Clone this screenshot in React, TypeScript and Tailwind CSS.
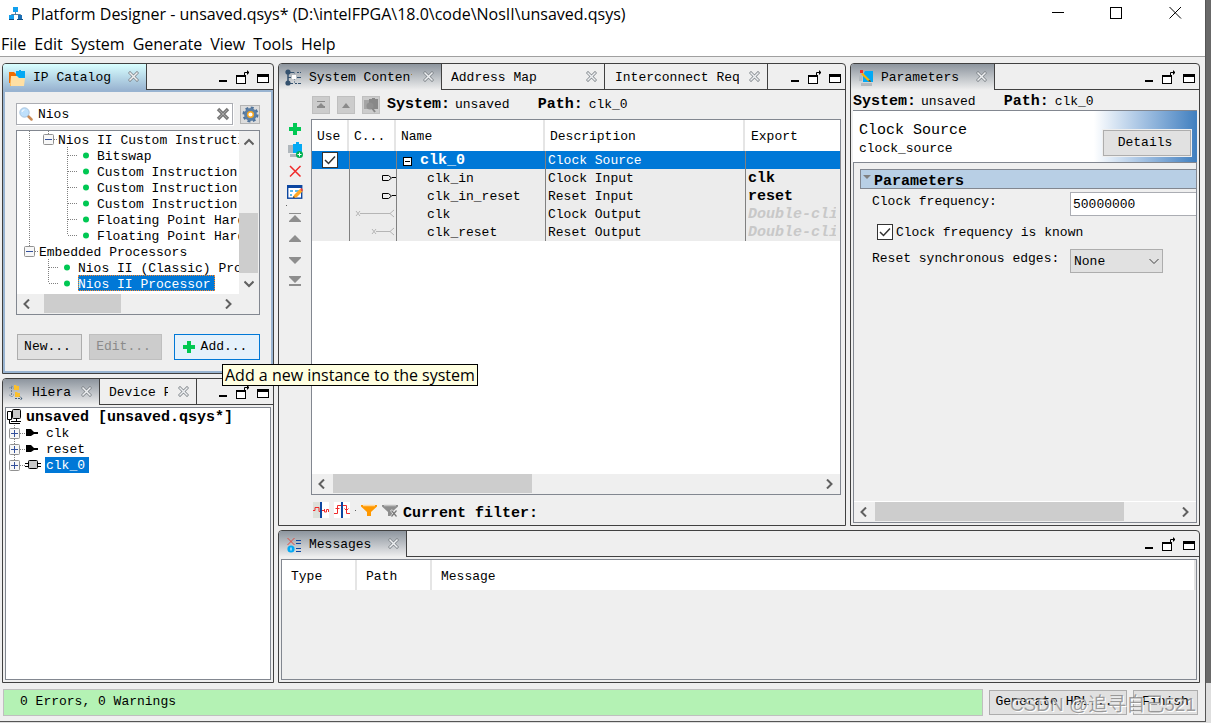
import { useState, type ReactNode } from "react";
import clsx from "clsx";

const mono = "font-['Liberation_Mono','Noto_Sans_CJK_SC',monospace]";
const ui = "font-['Open_Sans','Noto_Sans_CJK_SC',sans-serif]";

/* ---------- window chrome icons ---------- */

function AppIcon() {
  return (
    <svg width="14" height="14" viewBox="0 0 14 14" fill="none">
      <rect x="4" y="0" width="5" height="5" fill="#12a0ee" />
      <path d="M6.5 5v3M2.5 9V7.500h9V9" stroke="#5b7f9c" />
      <rect x="0" y="8" width="5" height="4" fill="#12a0ee" />
      <rect x="9" y="8" width="4" height="4" fill="#1b6fb5" />
      <path d="M0 12.500h5M8 12.500h6" stroke="#0d4f86" />
    </svg>
  );
}

function CloseTabIcon() {
  return (
    <svg width="11" height="11" viewBox="0 0 11 11" fill="none" strokeLinecap="square">
      <path d="M2 2l7 7M9 2l-7 7" stroke="#7d8388" strokeWidth="3" />
      <path d="M2 2l7 7M9 2l-7 7" stroke="#eef0f2" strokeWidth="1.5" />
    </svg>
  );
}

function PanelButtons() {
  return (
    <div className="flex gap-[5px] pb-[5px] pr-1">
      <button aria-label="Minimize panel">
        <svg width="14" height="14" viewBox="0 0 14 14" className="block">
          <path d="M2 10h8v2H2z" fill="#000" />
        </svg>
      </button>
      <button aria-label="Float panel">
        <svg width="14" height="14" viewBox="0 0 14 14" className="block" fill="none" stroke="#000">
          <rect x="0.500" y="5.500" width="9" height="8" fill="#fff" />
          <path d="M0 6h10" strokeWidth="2" />
          <path d="M8.500 5V2.500H13M11.500 0.500v4M12.500 1.500v2" />
        </svg>
      </button>
      <button aria-label="Maximize panel">
        <svg width="14" height="14" viewBox="0 0 14 14" className="block" fill="none" stroke="#000">
          <rect x="2.500" y="4.500" width="11" height="8" fill="#fff" />
          <path d="M2 5.500h12" strokeWidth="3" />
        </svg>
      </button>
    </div>
  );
}

/* ---------- panel + tabs ---------- */

type TabDef = { label: string; icon?: ReactNode; width: string; clip?: string; pad?: string };

function Panel({
  tabs,
  focused,
  className,
  children,
}: {
  tabs: TabDef[];
  focused?: boolean;
  className?: string;
  children: ReactNode;
}) {
  const [active, setActive] = useState(0);
  return (
    <section className={clsx("flex min-w-0 flex-col rounded-t-[4px] border border-[#404040] bg-[#efefef]", className)}>
      <div className="flex h-[26px] shrink-0">
        {tabs.map((tab, i) => (
          <div
            key={tab.label}
            className={clsx(
              "flex shrink-0 items-center justify-between border-r border-[#404040] pr-[7px]",
              tab.width,
              tab.pad ?? "pl-[6px]",
              i === 0 && "rounded-tl-[3px]",
              i !== active && "border-b",
              i === active && focused && "bg-linear-to-b from-[#d9ffff] to-[#99b4d1]",
              i === active && !focused && "bg-linear-to-b from-[#8d959e] to-[#efefef]"
            )}
          >
            <button onClick={() => setActive(i)} className="flex min-w-0 items-center gap-[7px] pt-px">
              {tab.icon}
              <span className={clsx("overflow-hidden whitespace-nowrap pt-px", tab.clip)}>{tab.label}</span>
            </button>
            <button aria-label={`Close ${tab.label}`} className="pb-px">
              <CloseTabIcon />
            </button>
          </div>
        ))}
        <div className="flex flex-1 items-end justify-end border-b border-[#404040]">
          <PanelButtons />
        </div>
      </div>
      {children}
    </section>
  );
}

/* ---------- scrollbars ---------- */

function Chevron({ d }: { d: string }) {
  return (
    <svg width="10" height="10" viewBox="0 0 10 10" fill="none" stroke="#606060" strokeWidth="2">
      <path d={d} />
    </svg>
  );
}

function HScroll({ thumb }: { thumb: string }) {
  return (
    <div className="flex h-5 shrink-0 bg-[#efefef]">
      <button aria-label="Scroll left" className="flex w-[21px] items-center justify-center pr-px">
        <Chevron d="M7 0.500L2.500 5 7 9.500" />
      </button>
      <div className="flex-1 pb-px">
        <div className={clsx("h-full bg-[#cdcdcd]", thumb)} />
      </div>
      <button aria-label="Scroll right" className="flex w-[21px] items-center justify-center pr-px">
        <Chevron d="M3 0.500L7.500 5 3 9.500" />
      </button>
    </div>
  );
}

/* ---------- tree pieces ---------- */

type Guide = "blank" | "line" | "tee" | "ell";

const guidePaths: Record<Guide, string> = {
  blank: "",
  line: "M12.500 0v16",
  tee: "M12.500 0v16M13 8.500h6",
  ell: "M12.500 0v8M13 8.500h6",
};

function GuideCell({ kind }: { kind: Guide }) {
  return (
    <svg width="19" height="16" viewBox="0 0 19 16" fill="none" stroke="#808080" strokeDasharray="1 1" className="shrink-0">
      <path d={guidePaths[kind]} />
    </svg>
  );
}

function Expander({ open }: { open?: boolean }) {
  return (
    <svg width="22" height="16" viewBox="0 0 22 16" fill="none" className="shrink-0">
      <path d="M12.500 0v3M18 8.500h4" stroke="#808080" strokeDasharray="1 1" />
      <rect x="7.500" y="3.500" width="10" height="10" rx="1" fill="#f7f7f7" stroke="#919191" />
      <path d={open ? "M9 8.500h7" : "M9 8.500h7M12.500 5v7"} stroke="#33509c" />
    </svg>
  );
}

function LeafDot() {
  return (
    <svg width="23" height="16" viewBox="0 0 23 16" fill="none" className="shrink-0">
      <path d="M0 8.500h4" stroke="#808080" strokeDasharray="1 1" />
      <circle cx="12" cy="8.500" r="3" fill="#00c853" />
    </svg>
  );
}

type CatalogRow = { label: string; guides: Guide[]; group?: boolean };

const catalog: CatalogRow[] = [
  { label: "Nios II Custom Instruction Components", guides: ["line"], group: true },
  { label: "Bitswap", guides: ["line", "blank", "tee"] },
  { label: "Custom Instruction Interconnect", guides: ["line", "blank", "tee"] },
  { label: "Custom Instruction Master", guides: ["line", "blank", "tee"] },
  { label: "Custom Instruction Slave", guides: ["line", "blank", "tee"] },
  { label: "Floating Point Hardware", guides: ["line", "blank", "tee"] },
  { label: "Floating Point Hardware 2", guides: ["line", "blank", "ell"] },
  { label: "Embedded Processors", guides: [], group: true },
  { label: "Nios II (Classic) Processor", guides: ["blank", "tee"] },
  { label: "Nios II Processor", guides: ["blank", "ell"] },
];

/* ---------- IP catalog ---------- */

function CatalogTabIcon() {
  return (
    <svg width="17" height="16" viewBox="0 0 17 16">
      <path d="M0 2h5l2 2v9H0z" fill="#ef6c00" />
      <path d="M7 1h3V0h2v1h4v7H7z" fill="#03a9f4" />
      <path d="M2 6h6l2 2h6l-1 8H1z" fill="#ffe0a3" />
      <path d="M1 8l1 8h-1z" fill="#ffb74d" />
    </svg>
  );
}

function IpCatalog() {
  const [query, setQuery] = useState("Nios");
  const [selected, setSelected] = useState("Nios II Processor");

  return (
    <Panel focused className="h-[311px] shrink-0" tabs={[{ label: "IP Catalog", icon: <CatalogTabIcon />, width: "w-[144px]" }]}>
      <div className="flex min-h-0 flex-1 flex-col border-2 border-[#99b4d1] p-[11px]">
        <div className="flex h-[22px] shrink-0 gap-[7px]">
          <div className="flex min-w-0 flex-1 items-center border border-[#abadb3] bg-white px-[2px] shadow-[1px_1px_0_#fff]">
            <svg width="14" height="14" viewBox="0 0 14 14" fill="none">
              <path d="M8.500 8.500l4 4" stroke="#c98a55" strokeWidth="2.500" strokeLinecap="round" />
              <circle cx="5.500" cy="5.500" r="4.700" fill="#bfe0fb" stroke="#a9c4de" />
              <path d="M3 5a2.500 2.500 0 0 1 2.500-2.200" stroke="#fff" />
            </svg>
            <input
              aria-label="Search IP"
              value={query}
              onChange={(e) => setQuery(e.target.value)}
              className="min-w-0 flex-1 bg-transparent pl-[5px] pt-px outline-none"
            />
            <button onClick={() => setQuery("")} aria-label="Clear search">
              <svg width="14" height="14" viewBox="0 0 14 14" fill="none" className="block">
                <path d="M2 2l10 10M12 2L2 12" stroke="#7b7b7b" strokeWidth="3.400" />
                <path d="M3 3l8 8M11 3l-8 8" stroke="#a3a3a3" />
              </svg>
            </button>
          </div>
          <button aria-label="Settings" className="mt-[2px] flex h-[19px] w-5 items-center justify-center border border-[#b4b4b4] bg-[#dcdcdc]">
            <svg width="17" height="17" viewBox="0 0 18 18" fill="none" className="shrink-0">
              <circle cx="9" cy="9" r="7" stroke="#4f7299" strokeWidth="3" strokeDasharray="3 2.500" />
              <circle cx="9" cy="9" r="4.800" stroke="#5b7fa6" strokeWidth="4" />
              <circle cx="9" cy="9" r="3" fill="#fff" stroke="#f5a623" strokeWidth="1.600" />
            </svg>
          </button>
        </div>

        <div className="mt-[5px] flex min-h-0 flex-1 flex-col border border-[#828790] bg-white">
          <div className="flex min-h-0 flex-1">
            <ul className="min-w-0 flex-1 overflow-hidden">
              {catalog.map((row, i) => (
                <li key={i} className="flex h-4 items-center whitespace-nowrap">
                  {row.guides.map((g, n) => (
                    <GuideCell key={n} kind={g} />
                  ))}
                  {row.group ? <Expander open /> : <LeafDot />}
                  <button
                    onClick={() => setSelected(row.label)}
                    className={clsx(
                      "h-4 pt-[2px]",
                      selected === row.label &&
                        "bg-[#0078d7] pr-1 text-white outline-1 -outline-offset-1 outline-dotted outline-[#ff8728]"
                    )}
                  >
                    {row.label}
                  </button>
                </li>
              ))}
            </ul>
            <div className="flex w-5 shrink-0 flex-col items-center bg-[#efefef] pr-px">
              <button aria-label="Scroll up" className="flex h-[21px] items-center">
                <Chevron d="M0.500 7.500L5 3l4.500 4.500" />
              </button>
              <div className="flex w-full flex-1 flex-col justify-end">
                <div className="h-[50%] bg-[#cdcdcd]" />
              </div>
              <button aria-label="Scroll down" className="flex h-[21px] items-center">
                <Chevron d="M0.500 2.500L5 7l4.500-4.500" />
              </button>
            </div>
          </div>
          <div className="bg-[#efefef] pr-5">
            <HScroll thumb="ml-[6px] w-[43%]" />
          </div>
        </div>

        <div className="mt-[19px] flex h-[26px] shrink-0 pl-px">
          <button className="w-[65px] border border-[#adadad] bg-[#e1e1e1] pr-1">New...</button>
          <button disabled className="ml-[7px] w-[73px] border border-[#bfbfbf] bg-[#cccccc] pr-1 text-[#8a8a8a]">
            Edit...
          </button>
          <button className="ml-auto flex w-[86px] items-center justify-center gap-[6px] border border-[#0078d7] bg-[#e5f1fb] pr-1">
            <svg width="12" height="12" viewBox="0 0 12 12">
              <path d="M4 0h4v4h4v4H8v4H4V8H0V4h4z" fill="#00c853" />
            </svg>
            Add...
          </button>
        </div>
      </div>
    </Panel>
  );
}

/* ---------- hierarchy ---------- */

function HierarchyTabIcon() {
  return (
    <svg width="14" height="16" viewBox="0 0 14 16" fill="none">
      <path d="M2.500 2v9M0 3.500l2.500-2.500L5 3.500M0 9.500L2.500 12 5 9.500" stroke="#6b7f92" strokeDasharray="2 1" />
      <path d="M5 0h2l1 1h2v4H5zM6 7h2l1 1h2v4H6z" fill="#fbc02d" />
      <path d="M6 13.500h7M11 11.500l2 2-2 2" stroke="#44607a" strokeDasharray="2 1" />
    </svg>
  );
}

function PortIcon() {
  return (
    <svg width="14" height="10" viewBox="0 0 14 10">
      <path d="M1 1h5l3 3h4v2H9L6 8H1z" fill="#000" />
    </svg>
  );
}

function ChipIcon() {
  return (
    <svg width="16" height="10" viewBox="0 0 16 10" fill="none">
      <path d="M0 3.500h16M0 6.500h16" stroke="#000" />
      <rect x="3.500" y="0.500" width="9" height="8" rx="1" fill="#c8c8c8" stroke="#000" />
    </svg>
  );
}

function Hierarchy() {
  const [selected, setSelected] = useState("clk_0");
  const nodes = [
    { name: "clk", icon: <PortIcon /> },
    { name: "reset", icon: <PortIcon /> },
    { name: "clk_0", icon: <ChipIcon /> },
  ];
  return (
    <Panel
      className="min-h-0 flex-1"
      tabs={[
        { label: "Hierarchy", icon: <HierarchyTabIcon />, width: "w-[97px]", clip: "w-10 ml-[2px]" },
        { label: "Device Family", width: "w-[97px]", clip: "w-[59px]", pad: "pl-[9px]" },
      ]}
    >
      <div className="min-h-0 flex-1 p-[2px]">
        <div className="h-full border border-[#828790] bg-white">
          <div className="flex h-[17px] items-center gap-1 pl-px">
            <svg width="15" height="15" viewBox="0 0 15 15" fill="none" stroke="#000">
              <path d="M0.500 2.500h4v8h-4z" fill="#fff" />
              <rect x="5.500" y="0.500" width="8" height="9" rx="1" fill="#c8c8c8" />
              <path d="M9.500 10v2M4 12.500h10M2.500 11v3.500H13" />
            </svg>
            <span className="pt-[3px] text-[15px] font-bold leading-4">unsaved [unsaved.qsys*]</span>
          </div>
          <ul>
            {nodes.map((n, i) => (
              <li key={n.name} className="flex h-4 items-center">
                <svg width="19" height="16" viewBox="0 0 19 16" fill="none">
                  <path d={i < 2 ? "M8.500 0v16M14 8.500h5" : "M8.500 0v8M14 8.500h5"} stroke="#808080" strokeDasharray="1 1" />
                  <rect x="3.500" y="3.500" width="10" height="10" rx="1" fill="#f7f7f7" stroke="#919191" />
                  <path d="M5 8.500h7M8.500 5v7" stroke="#33509c" />
                </svg>
                <span className="flex w-5 justify-start">{n.icon}</span>
                <button
                  onClick={() => setSelected(n.name)}
                  className={clsx("h-4 pl-px pr-1 pt-px", selected === n.name && "bg-[#0078d7] text-white")}
                >
                  {n.name}
                </button>
              </li>
            ))}
          </ul>
        </div>
      </div>
    </Panel>
  );
}

/* ---------- system contents ---------- */

function SystemPath({ className }: { className?: string }) {
  return (
    <div className={clsx("flex items-center whitespace-nowrap", className)}>
      <b className="text-[15px] leading-4">System:</b>
      <span className="ml-[5px]">unsaved</span>
      <b className="ml-7 text-[15px] leading-4">Path:</b>
      <span className="ml-[6px]">clk_0</span>
    </div>
  );
}

function SystemTabIcon() {
  return (
    <svg width="17" height="17" viewBox="0 0 17 17" fill="none">
      <path d="M3 3.500h7M12 3.500h2M15 3.500h1M3 8.500h3M12 8.500h4M3 14.500h5M10 14.500h2M13 14.500h3" stroke="#34516e" />
      <path d="M9.500 3v11" stroke="#8393a3" strokeDasharray="2 1" />
      <path d="M3 3v11" stroke="#34516e" strokeWidth="1.500" />
      <circle cx="3" cy="3" r="2.600" fill="#34516e" />
      <circle cx="3" cy="14" r="2.600" fill="#34516e" />
      <path d="M7 6h4v4H7z" fill="#fff" />
    </svg>
  );
}

function ToolSvg({ children }: { children: ReactNode }) {
  return (
    <svg width="16" height="16" viewBox="0 0 16 16" fill="none" className="block">
      {children}
    </svg>
  );
}

const editTools = [
  { label: "Add", art: <path d="M6 2h4v4h4v4h-4v4H6v-4H2V6h4z" fill="#00c853" /> },
  {
    label: "Duplicate",
    art: (
      <>
        <path d="M1 3h5v8H1zM3 12h8v3H3z" fill="#b0b7bc" />
        <path d="M6 2h3V0h3v2h3v9H6z" fill="#03a9f4" />
        <circle cx="12.500" cy="12.500" r="3.500" fill="#00b050" />
        <path d="M10.500 12.500h4M12.500 10.500v4" stroke="#fff" />
      </>
    ),
  },
  { label: "Remove", art: <path d="M3 3l10.500 10.500M13.500 3L3 13.500" stroke="#f02a2a" strokeWidth="1.500" /> },
  {
    label: "Edit",
    art: (
      <>
        <rect x="0.700" y="1.700" width="14" height="12.500" fill="#fff" stroke="#0d47a1" strokeWidth="1.400" />
        <path d="M0 2.500h15" stroke="#0d47a1" strokeWidth="3" />
        <path d="M3 7h3M3 11h2M8 7h4" stroke="#29a3e8" strokeWidth="1.500" />
        <path d="M6 14l1-3 6-6 2.500 2.500-6 6z" fill="#ffa726" />
        <path d="M13 5l1.500-1L16 6l-.8 1.500z" fill="#f44336" />
        <path d="M6 14l.5-2 1.500 1.500z" fill="#333" />
      </>
    ),
  },
];

const moveTools = [
  { label: "Move to top", art: <path d="M2 3h12v1H2zM8 5l6 6v1H2v-1z" fill="#8e8e8e" /> },
  { label: "Move up", art: <path d="M8 4l6 6v1H2v-1z" fill="#8e8e8e" /> },
  { label: "Move down", art: <path d="M2 5h12v1l-6 6-6-6z" fill="#8e8e8e" /> },
  { label: "Move to bottom", art: <path d="M2 3h12v1l-6 6-6-6zM2 11h12v2H2z" fill="#8e8e8e" /> },
];

type SysRow = { name: string; description: string; exportAs?: string; hint?: boolean; conn: ReactNode };

const portIn = <path d="M34.500 6.500h6l3 2.500-3 2.500h-6zM44 8.500h4" stroke="#000" />;

const sysRows: SysRow[] = [
  { name: "clk_in", description: "Clock Input", exportAs: "clk", conn: portIn },
  { name: "clk_in_reset", description: "Reset Input", exportAs: "reset", conn: portIn },
  {
    name: "clk",
    description: "Clock Output",
    hint: true,
    conn: <path d="M8 6l4 5M12 6l-4 5M12 8.500h30M46 5l-4 3.500 4 3.500" stroke="#b5b5b5" />,
  },
  {
    name: "clk_reset",
    description: "Reset Output",
    hint: true,
    conn: <path d="M24 6l4 5M28 6l-4 5M28 8.500h14M46 5l-4 3.500 4 3.500" stroke="#b5b5b5" />,
  },
];

function CheckBox({ id, label }: { id: string; label?: string }) {
  return (
    <span className="relative block h-4 w-4">
      <input
        id={id}
        type="checkbox"
        defaultChecked
        aria-label={label}
        className="peer block h-4 w-4 appearance-none border border-[#333] bg-white"
      />
      <svg
        width="16"
        height="16"
        viewBox="0 0 16 16"
        fill="none"
        className="pointer-events-none absolute inset-0 hidden peer-checked:block"
      >
        <path d="M3 8l3.500 3.500L13 4.500" stroke="#333" strokeWidth="1.500" />
      </svg>
    </span>
  );
}

function SystemTable() {
  const th = "h-[31px] border-r-2 border-[#e5e5e5] bg-white p-0 pl-[5px] pt-[2px] text-left font-normal";
  const td = "h-[18px] overflow-hidden border-l border-[#808080] p-0 pl-[2px] pt-[2px] leading-4";
  return (
    <table className="w-full table-fixed border-separate border-spacing-0 whitespace-nowrap">
      <colgroup>
        <col className="w-[37px]" />
        <col className="w-[47px]" />
        <col className="w-[149px]" />
        <col className="w-[200px]" />
        <col />
      </colgroup>
      <thead>
        <tr>
          <th className={th}>Use</th>
          <th className={th}>C...</th>
          <th className={th}>Name</th>
          <th className={th}>Description</th>
          <th className="bg-white p-0 pl-[6px] pt-[2px] text-left font-normal">Export</th>
        </tr>
      </thead>
      <tbody>
        <tr className="bg-[#0078d7] text-white">
          <td className="h-[18px] p-0 pl-[10px]">
            <CheckBox id="use-clk0" label="Use clk_0" />
          </td>
          <td className={td} />
          <td className={td}>
            <div className="flex items-center gap-2 pl-1">
              <svg width="9" height="9" viewBox="0 0 9 9">
                <rect x="0.500" y="0.500" width="8" height="8" fill="#fff" stroke="#000" />
                <path d="M2 4h5v1H2z" fill="#000" />
              </svg>
              <b className="text-[15px] leading-4">clk_0</b>
            </div>
          </td>
          <td className={td}>Clock Source</td>
          <td className={td} />
        </tr>
        {sysRows.map((row) => (
          <tr key={row.name} className="bg-[#ececec]">
            <td className="h-[18px] p-0" />
            <td className="h-[18px] border-l border-[#808080] p-0">
              <svg width="46" height="18" viewBox="2 0 46 18" fill="none" className="block">
                {row.conn}
              </svg>
            </td>
            <td className={td}>
              <span className="pl-7">{row.name}</span>
            </td>
            <td className={td}>{row.description}</td>
            <td className={clsx(td, "pr-1")}>
              {row.hint ? (
                <b className="block overflow-hidden text-[15px] italic leading-4 text-[#c8c8c8]">Double-click to export</b>
              ) : (
                <b className="block text-[15px] leading-4">{row.exportAs}</b>
              )}
            </td>
          </tr>
        ))}
      </tbody>
    </table>
  );
}

function SystemContents() {
  const headBtn = "flex h-[18px] w-[18px] items-center justify-center border border-[#bfbfbf] bg-[#cccccc]";
  return (
    <Panel
      className="flex-1"
      tabs={[
        { label: "System Contents", icon: <SystemTabIcon />, width: "w-[163px]", clip: "w-[103px]" },
        { label: "Address Map", width: "w-[163px]", pad: "pl-[9px]" },
        { label: "Interconnect Requirements", width: "w-[163px]", clip: "w-[124px]", pad: "pl-[10px]" },
      ]}
    >
      <div className="flex h-[29px] shrink-0 items-center gap-[7px] pl-[33px]">
        <button disabled aria-label="Top of hierarchy" className={headBtn}>
          <svg width="8" height="8" viewBox="0 0 8 8">
            <path d="M0 0h8v1H0zM4 2l3 3h1v2H0V5h1z" fill="#8a8a8a" />
          </svg>
        </button>
        <button disabled aria-label="Up a level" className={headBtn}>
          <svg width="8" height="8" viewBox="0 0 8 8">
            <path d="M4 2l4 5H0z" fill="#8a8a8a" />
          </svg>
        </button>
        <button disabled aria-label="Drill into" className={headBtn}>
          <svg width="16" height="16" viewBox="0 0 16 16" fill="none" className="shrink-0">
            <path d="M1 3h5v9H1z" fill="#a5a5a5" />
            <path d="M6 2h3V1h3v1h3v10H6z" fill="#888" />
            <circle cx="7" cy="9" r="3.500" fill="#909090" />
            <path d="M9 11l3 4" stroke="#888" strokeWidth="2" />
          </svg>
        </button>
        <SystemPath className="pt-px" />
      </div>
      <div className="flex min-h-0 flex-1 pr-1">
        <div className="flex w-8 shrink-0 flex-col items-center pt-[2px]">
          <div className="flex flex-col gap-[5px]">
            {editTools.map((t) => (
              <button key={t.label} aria-label={t.label}>
                <ToolSvg>{t.art}</ToolSvg>
              </button>
            ))}
          </div>
          <div className="flex h-[10px] w-full items-center pl-[7px]">
            <span className="h-px w-px bg-[#606060]" />
          </div>
          <div className="flex flex-col gap-[5px]">
            {moveTools.map((t) => (
              <button key={t.label} aria-label={t.label}>
                <ToolSvg>{t.art}</ToolSvg>
              </button>
            ))}
          </div>
        </div>
        <div className="flex min-w-0 flex-1 flex-col border border-[#828790] bg-white">
          <div className="min-h-0 flex-1 overflow-hidden">
            <SystemTable />
          </div>
          <HScroll thumb="w-[41%]" />
        </div>
      </div>
      <div className="flex h-[30px] shrink-0 items-center gap-[5px] pl-[34px]">
        <button aria-label="Clock domains">
          <ToolSvg>
            <path d="M0 0h8v16H0z" fill="#dde0da" />
            <path d="M8 0h8v16H8z" fill="#fff" />
            <path d="M0 8.500h2v-3h4v4h3M9 8.500h2M11.500 7v3h2V7.500h2V10" stroke="#f02a2a" />
            <path d="M7 0h2v16H7z" fill="#0d47a1" />
          </ToolSvg>
        </button>
        <button aria-label="Reset domains">
          <ToolSvg>
            <path d="M0 0h16v16H0z" fill="#fff" />
            <path d="M0 11.500h3.500v-8H7M1.500 6.500h4M9 3.500h3.500v8H16M10.500 6.500l2 2 2-2" stroke="#f02a2a" />
            <path d="M7 0h2v16H7z" fill="#0d47a1" />
          </ToolSvg>
        </button>
        <span className="h-px w-px bg-[#606060]" />
        <button aria-label="Filter">
          <ToolSvg>
            <path d="M0 3h16v1.500L10 10v4H6v-4L0 4.500z" fill="#ff9800" />
            <path d="M2 3.500h12" stroke="#ffd699" strokeWidth="1.500" />
          </ToolSvg>
        </button>
        <button aria-label="Clear filter">
          <ToolSvg>
            <path d="M0 3h16v1.500L10 10v4H6v-4L0 4.500z" fill="#8e8e8e" />
            <path d="M2 3.500h12" stroke="#c0c0c0" strokeWidth="1.500" />
            <path d="M9 8l6 7M15 8l-6 7" stroke="#efefef" strokeWidth="2.500" />
            <path d="M9.500 8.500l5 6M14.500 8.500l-5 6" stroke="#777" strokeWidth="1.200" />
          </ToolSvg>
        </button>
        <b className="pt-2 text-[15px] leading-4">Current filter:</b>
      </div>
    </Panel>
  );
}

/* ---------- parameters ---------- */

function ParametersTabIcon() {
  return (
    <svg width="15" height="16" viewBox="0 0 15 16" fill="none">
      <path d="M2 13h11v3H2zM0 5h3v6H0z" fill="#b3b9be" />
      <path d="M6 1h8v11H4V5z" fill="#03a9f4" />
      <path d="M4 3l7 7 1 2-3-1-7-7z" fill="#ffb300" />
      <path d="M9 11l3 1-1-2z" fill="#333" />
      <path d="M1 0h3v3H1z" fill="#f02a2a" />
    </svg>
  );
}

function Parameters() {
  return (
    <Panel
      className="w-[350px] shrink-0"
      tabs={[{ label: "Parameters", icon: <ParametersTabIcon />, width: "w-[144px]", pad: "pl-[8px]" }]}
    >
      <div className="flex min-h-0 flex-1 flex-col px-[2px] pb-[2px]">
        <SystemPath className="h-5 pt-[3px]" />
        <div className="flex h-[52px] shrink-0 items-center justify-between border-t border-[#828790] bg-white bg-linear-to-r from-white from-70% to-[#3f7fbf] px-[6px]">
          <div className="pt-1">
            <p className="text-[15px] leading-5">Clock Source</p>
            <p className="leading-4">clock_source</p>
          </div>
          <button className="mt-[12px] h-[26px] w-[88px] border border-[#adadad] bg-[#e1e1e1] pr-1 outline-1 outline-[#efefef]">
            Details
          </button>
        </div>
        <div className="flex min-h-0 flex-1 flex-col border border-[#828790]">
          <div className="min-h-0 flex-1 overflow-hidden pl-[6px] pt-[6px]">
            <div className="flex h-5 items-center border border-r-0 border-[#828790] bg-[#b8cfe5]">
              <svg width="8" height="16" viewBox="0 0 8 16" className="ml-[2px]">
                <path d="M0 4h8l-4 4z" fill="#808080" />
              </svg>
              <b className="ml-[3px] pt-[6px] text-[15px] leading-4">Parameters</b>
            </div>
            <div className="flex items-start pl-3 pt-[3px]">
              <label htmlFor="clock-frequency" className="w-[198px] shrink-0 leading-5">
                Clock frequency:
              </label>
              <input
                id="clock-frequency"
                defaultValue="50000000"
                className="h-6 min-w-0 flex-1 border border-r-0 border-[#abadb3] bg-white pl-[2px] pt-px outline-none"
              />
            </div>
            <div className="flex items-center gap-[3px] pb-2 pl-[17px] pt-2">
              <CheckBox id="frequency-known" />
              <label htmlFor="frequency-known" className="pt-[2px] leading-[14px]">
                Clock frequency is known
              </label>
            </div>
            <div className="flex items-start pl-3">
              <label htmlFor="reset-edges" className="w-[198px] shrink-0 pt-px leading-5">
                Reset synchronous edges:
              </label>
              <div className="relative mt-px w-[93px]">
                <select id="reset-edges" className="h-6 w-full appearance-none border border-[#adadad] bg-[#e1e1e1] pl-[3px] pt-[2px]">
                  <option>None</option>
                </select>
                <svg
                  width="10"
                  height="10"
                  viewBox="0 0 10 10"
                  fill="none"
                  stroke="#404040"
                  className="pointer-events-none absolute right-1 top-[7px]"
                >
                  <path d="M0.500 3L5 7.500 9.500 3" />
                </svg>
              </div>
            </div>
          </div>
          <div className="border-t border-white">
            <HScroll thumb="w-[83%]" />
          </div>
        </div>
      </div>
    </Panel>
  );
}

/* ---------- messages ---------- */

function MessagesTabIcon() {
  return (
    <svg width="15" height="16" viewBox="0 0 15 16" fill="none">
      <path d="M0.500 1l7 7M7.500 1l-7 7" stroke="#e0483e" />
      <circle cx="4" cy="12" r="3.600" fill="#03a9f4" />
      <path d="M3.500 10.500h1v3h-1z" fill="#fff" />
      <path d="M9 3.500h5M9 6.500h5M9 11.500h5M9 14.500h5" stroke="#0d47a1" />
    </svg>
  );
}

function Messages() {
  const th = "h-[30px] border-r-2 border-[#e5e5e5] bg-white p-0 pl-[9px] pt-1 text-left font-normal";
  return (
    <Panel className="h-[153px] shrink-0" tabs={[{ label: "Messages", icon: <MessagesTabIcon />, width: "w-[128px]", pad: "pl-[8px]" }]}>
      <div className="min-h-0 flex-1 p-[2px]">
        <div className="h-full border border-[#828790]">
          <table className="w-full table-fixed border-separate border-spacing-0">
            <thead>
              <tr>
                <th className={clsx(th, "w-[75px]")}>Type</th>
                <th className={clsx(th, "w-[75px]")}>Path</th>
                <th className={th}>Message</th>
              </tr>
            </thead>
          </table>
        </div>
      </div>
    </Panel>
  );
}

/* ---------- window ---------- */

const menus = ["File", "Edit", "System", "Generate", "View", "Tools", "Help"];

export default function App() {
  return (
    <div
      className={clsx(
        mono,
        "relative flex h-screen min-h-[640px] overflow-hidden bg-[linear-gradient(to_top,#dedede_40px,#696969_40px)] pb-px pr-[5px] text-[13px] leading-4 text-black"
      )}
    >
      <div className="flex min-w-0 flex-1 flex-col border-b border-r border-[#555] bg-white">
        <header className={clsx(ui, "shrink-0")}>
          <div className="flex h-7 items-center pl-[9px]">
            <AppIcon />
            <h1 className="ml-2 whitespace-nowrap pb-px text-[16px]">
              Platform Designer - unsaved.qsys* (D:\intelFPGA\18.0\code\NosII\unsaved.qsys)
            </h1>
            <div className="ml-auto flex gap-[46px] pb-1 pr-[23px]">
              <button aria-label="Minimize">
                <svg width="13" height="13" viewBox="0 0 13 13" stroke="#000" className="block">
                  <path d="M1 6.500h12" />
                </svg>
              </button>
              <button aria-label="Maximize">
                <svg width="13" height="13" viewBox="0 0 13 13" fill="none" stroke="#000" className="block">
                  <rect x="0.500" y="1.500" width="11" height="11" />
                </svg>
              </button>
              <button aria-label="Close">
                <svg width="13" height="13" viewBox="0 0 13 13" stroke="#000" className="block">
                  <path d="M0.500 1l11.500 11.500M12 1L0.500 12.500" />
                </svg>
              </button>
            </div>
          </div>
          <nav className="flex h-7 items-center gap-2 pl-px pt-1">
            {menus.map((m) => (
              <button key={m} className="text-[16px]">
                {m}
              </button>
            ))}
          </nav>
        </header>

        <main className="flex min-h-0 flex-1 flex-col border-t border-[#a0a0a0] bg-[#efefef] pl-[2px] pr-[5px] pt-[6px]">
          <div className="flex min-h-0 flex-1 gap-1">
            <div className="flex w-[272px] shrink-0 flex-col gap-1">
              <IpCatalog />
              <Hierarchy />
            </div>
            <div className="flex min-w-0 flex-1 flex-col gap-1">
              <div className="flex min-h-0 flex-1 gap-1">
                <SystemContents />
                <Parameters />
              </div>
              <Messages />
            </div>
          </div>
          <footer className="flex h-[38px] shrink-0 items-center gap-[6px] pl-px pr-[2px]">
            <p className="flex h-[27px] flex-1 items-center border border-[#bfbfbf] bg-[#b4f2b4] pl-4">0 Errors, 0 Warnings</p>
            <button className="h-[25px] w-[138px] border border-[#adadad] bg-[#e1e1e1] pr-2">Generate HDL...</button>
            <button className="h-[25px] w-[65px] border border-[#adadad] bg-[#e1e1e1]">Finish</button>
          </footer>
        </main>
      </div>

      <div
        role="tooltip"
        className={clsx(ui, "absolute left-[222px] top-[364px] flex h-[22px] items-center border border-black bg-[#ffffe1] px-[2px] text-[16px]")}
      >
        Add a new instance to the system
      </div>
      <div className="pointer-events-none absolute bottom-[6px] right-[15px] font-['Liberation_Sans','Noto_Sans_CJK_SC',sans-serif] text-[19px] leading-6 text-[#777]/70 [text-shadow:1px_1px_0_#fff]">
        CSDN @追寻自己521
      </div>
    </div>
  );
}
